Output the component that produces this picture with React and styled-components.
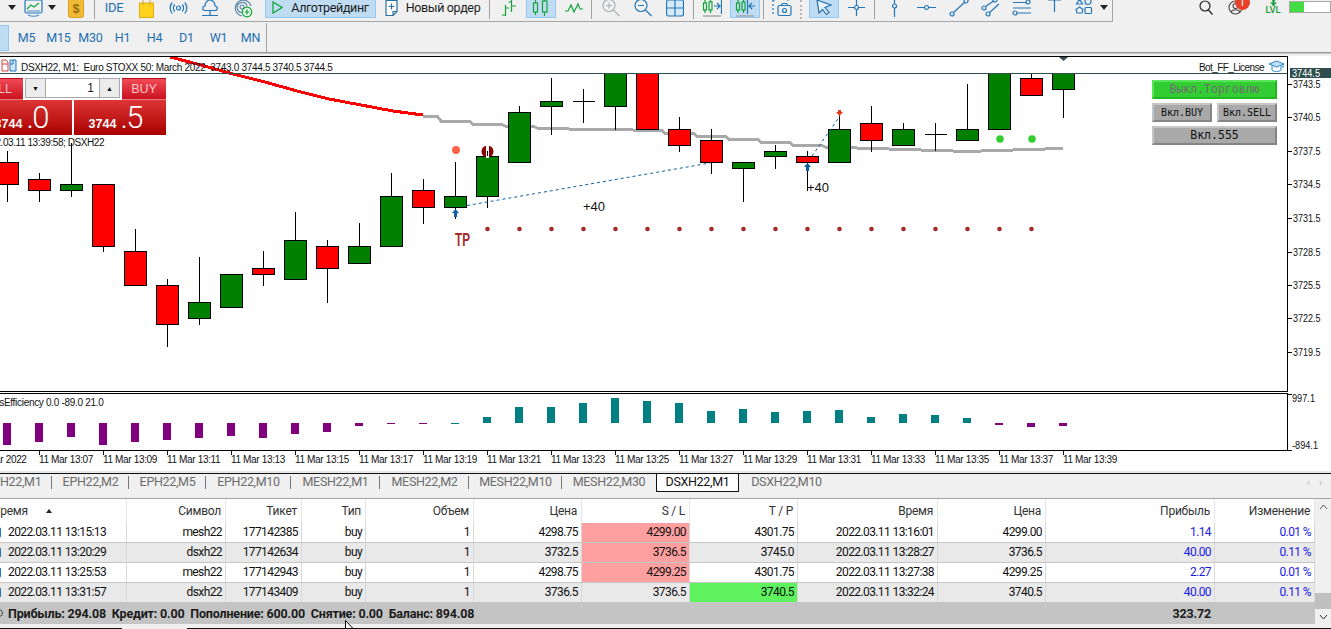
import React from 'react';
import styled, { createGlobalStyle } from 'styled-components';

const BLUE = '#2277b8';
const GREEN = '#12a33a';
const UI_FONT = 'Roboto, "Liberation Sans", sans-serif';
const CHART_FONT = '"Liberation Sans", Arial, sans-serif';

const GlobalStyle = createGlobalStyle`
  html, body { margin: 0; padding: 0; background: #f0f0f0; overflow: hidden; }
  #root { width: 1331px; height: 629px; overflow: hidden; }
`;

const Page = styled.div`
  position: relative;
  width: 1331px;
  height: 629px;
  overflow: hidden;
  background: #f0f0f0;
  font-family: ${UI_FONT};
  display: flex;
  flex-direction: column;
`;

/* ---------- toolbars ---------- */
const TopBar = styled.div`
  height: 22px;
  flex: none;
  display: flex;
  justify-content: space-between;
`;
const ToolGroup = styled.div`
  width: 1113px;
  height: 22px;
  box-sizing: border-box;
  display: flex;
  border-bottom: 1px solid #a6a6a6;
  border-right: 1px solid #a6a6a6;
  padding-left: 4px;
`;
const Slot = styled.div`
  flex: none;
  width: ${(p) => p.$w}px;
  height: 21px;
  margin-top: -3px;
  display: flex;
  align-items: center;
  justify-content: center;
  gap: ${(p) => p.$gap || 0}px;
  box-sizing: border-box;
  font-size: 12.5px;
  color: #1c1c1c;
  letter-spacing: -0.35px;
  ${(p) => p.$ml && `margin-left: ${p.$ml}px;`}
  ${(p) => p.$on && 'background: #c0dcf3; border: 1px solid #90c8f6;'}
`;
const IdeLabel = styled.span`
  color: #1f6fb0;
  font-size: 13px;
  letter-spacing: -0.4px;
`;
const Sep = styled.div`
  flex: none;
  width: 1px;
  height: 19px;
  background: #a0a0a0;
`;
const Grip = styled.div`
  flex: none;
  width: 9px;
  height: 19px;
  box-sizing: border-box;
  border-left: 2px dotted #b5b5b5;
`;
const StatusGroup = styled.div`
  display: flex;
  align-items: flex-start;
  height: 22px;
`;
const StatusSlot = styled.div`
  position: relative;
  flex: none;
  width: ${(p) => p.$w}px;
  margin-right: ${(p) => p.$mr || 0}px;
  height: 16px;
  margin-top: -1px;
  display: flex;
  justify-content: center;
  align-items: ${(p) => (p.$top ? 'flex-start' : 'center')};
`;
const Badge = styled.span`
  position: absolute;
  left: 16px;
  top: -4px;
  width: 15px;
  height: 15px;
  border-radius: 50%;
  background: #e8402a;
  color: #fff;
  font-size: 11px;
  line-height: 15px;
  text-align: center;
`;
const LvlText = styled.span`
  position: absolute;
  top: 6px;
  left: -2px;
  right: -2px;
  text-align: center;
  color: #1a9a3a;
  font-size: 9.5px;
  line-height: 10px;
  font-weight: 500;
  letter-spacing: -0.2px;
`;
const LevelBar = styled.div`
  flex: none;
  width: 42px;
  height: 12px;
  margin-top: 1px;
  margin-left: 8px;
  box-sizing: border-box;
  border: 1px solid #a8a8a8;
  background: #fff;
`;
const LevelFill = styled.div`
  height: 100%;
  background: #42dd42;
`;

const TfBar = styled.div`
  height: 30px;
  flex: none;
  display: flex;
`;
const TfGroup = styled.div`
  width: 267px;
  box-sizing: border-box;
  border-right: 1px solid #a6a6a6;
  display: flex;
  align-items: center;
  margin-top: 1px;
  height: 29px;
`;
const TfActive = styled.div`
  flex: none;
  width: 9px;
  height: 26px;
  margin-right: 1.5px;
  background: #c0dcf3;
  border-right: 1px solid #90c8f6;
  border-top: 1px solid #90c8f6;
  border-bottom: 1px solid #90c8f6;
  box-sizing: border-box;
  overflow: hidden;
  display: flex;
  justify-content: flex-end;
  align-items: center;
  padding-right: 6px;
  color: #1f6fb0;
  font-size: 12.5px;
`;
const TfItem = styled.div`
  flex: none;
  width: 32px;
  text-align: center;
  color: #1f6fb0;
  font-size: 12.5px;
  letter-spacing: -0.2px;
`;
const BarShade = styled.div`
  height: 4px;
  flex: none;
  box-sizing: border-box;
  border-top: 1px solid #9a9a9a;
  box-shadow: inset 0 1px 0 #c4c4c4;
`;

/* ---------- chart ---------- */
const ChartArea = styled.div`
  flex: none;
  background: #fff;
  display: flex;
  flex-direction: column;
`;
const MainPane = styled.div`
  position: relative;
  height: 336px;
  flex: none;
  overflow: hidden;
  font-family: ${CHART_FONT};
  svg { display: block; }
`;
const PaneTitle = styled.div`
  position: absolute;
  left: 21px;
  top: 6px;
  font-size: 10px;
  line-height: 11px;
  letter-spacing: -0.32px;
  color: #111;
  white-space: pre;
`;
const BotName = styled.div`
  position: absolute;
  right: 67px;
  top: 6px;
  font-size: 10px;
  line-height: 11px;
  letter-spacing: -0.55px;
  color: #111;
`;
const SideIcon = styled.div`
  position: absolute;
  top: ${(p) => p.$top}px;
  ${(p) => (p.$right ? `right: ${p.$right}px;` : `left: ${p.$left}px;`)}
  line-height: 0;
`;
const TradePanel = styled.div`
  position: absolute;
  left: 0;
  top: 22px;
  width: 166px;
  display: flex;
  flex-direction: column;
`;
const TradeTop = styled.div`
  display: flex;
  height: 22px;
`;
const TradeTab = styled.div`
  flex: none;
  width: ${(p) => p.$w}px;
  height: 22px;
  box-sizing: border-box;
  background: linear-gradient(#f14a56, #c9121f);
  border-top: 1px solid #b01018;
  border-bottom: 1px solid #ee7a80;
  color: #ffc4c4;
  font-size: 12.5px;
  display: flex;
  align-items: center;
  justify-content: ${(p) => (p.$left ? 'flex-end' : 'center')};
  padding-right: ${(p) => (p.$left ? 11 : 0)}px;
  overflow: hidden;
`;
const Spin = styled.div`
  flex: none;
  width: 95px;
  height: 20px;
  margin: 0 2px;
  box-sizing: border-box;
  border: 1px solid #a8a8a8;
  background: #fff;
  display: flex;
  align-items: stretch;
  font-size: 12px;
  color: #222;
`;
const SpinBtn = styled.div`
  flex: none;
  width: 19px;
  background: #ececec;
  ${(p) => (p.$end ? 'border-left: 1px solid #a8a8a8;' : 'border-right: 1px solid #a8a8a8;')}
  color: #111;
  display: flex;
  align-items: center;
  justify-content: center;
  font-size: 7px;
`;
const SpinVal = styled.div`
  flex: 1;
  text-align: right;
  padding-right: 5px;
  line-height: 18px;
`;
const TradeBottom = styled.div`
  display: flex;
  gap: 2px;
  height: 35px;
`;
const PriceBox = styled.div`
  flex: none;
  width: ${(p) => p.$w}px;
  height: 35px;
  box-sizing: border-box;
  background: linear-gradient(#dd3535, #a90000);
  color: #fff;
  display: flex;
  align-items: baseline;
  justify-content: flex-end;
  padding-right: ${(p) => p.$pr}px;
  line-height: 36px;
  overflow: hidden;
`;
const PriceSmall = styled.span`
  font-family: ${CHART_FONT};
  font-size: 12.5px;
  font-weight: 700;
  margin-right: 4px;
`;
const PriceBig = styled.span`
  font-family: Roboto, sans-serif;
  font-size: 31px;
  font-weight: 300;
  letter-spacing: -1.5px;
`;
const TimeNote = styled.div`
  position: absolute;
  left: -20px;
  top: 81px;
  font-size: 10px;
  line-height: 11px;
  letter-spacing: -0.42px;
  color: #111;
  white-space: pre;
`;
const BotButtons = styled.div`
  position: absolute;
  left: 1152px;
  top: 24px;
  width: 125px;
  display: flex;
  flex-wrap: wrap;
  gap: 4px 5px;
`;
const BotButton = styled.div`
  flex: none;
  width: ${(p) => p.$w}px;
  height: 19px;
  box-sizing: border-box;
  background: ${(p) => (p.$active ? '#32cd32' : '#a9a9a9')};
  border: 2px solid;
  border-color: ${(p) => (p.$active ? '#58e458 #1fb81f #1fb81f #58e458' : '#c6c6c6 #858585 #858585 #c6c6c6')};
  color: ${(p) => (p.$active ? '#6f6f6f' : '#111')};
  font-family: "DejaVu Sans Mono", "Liberation Mono", monospace;
  font-size: ${(p) => p.$size || 10}px;
  line-height: 15px;
  text-align: center;
  white-space: nowrap;
`;
const IndicatorPane = styled.div`
  position: relative;
  height: 58px;
  margin-top: 1px;
  flex: none;
  font-family: ${CHART_FONT};
  overflow: hidden;
  svg { display: block; }
`;
const IndicatorTitle = styled.div`
  position: absolute;
  left: -25px;
  top: 4px;
  font-size: 10px;
  line-height: 11px;
  letter-spacing: -0.3px;
  color: #111;
`;
const TimeAxis = styled.div`
  height: 20px;
  flex: none;
  display: flex;
  margin-left: -25px;
  width: 1356px;
  font-family: ${CHART_FONT};
`;
const TimeTick = styled.div`
  flex: none;
  width: 64px;
  height: 20px;
  box-sizing: border-box;
  font-size: 10px;
  letter-spacing: -0.35px;
  color: #111;
  white-space: nowrap;
  line-height: 18px;
  background: linear-gradient(#111, #111) 0 0 / 1px 4px no-repeat;
`;

/* ---------- tabs ---------- */
const TabStrip = styled.div`
  height: 25px;
  flex: none;
  box-sizing: border-box;
  border-top: 1px solid #111;
  background: #f0f0f0;
  margin-top: 2px;
  position: relative;
  box-shadow: 0 -2px 0 #e8e8e8;
`;
const TabRow = styled.div`
  display: flex;
  height: 18px;
  align-items: stretch;
`;
const Tab = styled.div`
  flex: none;
  width: ${(p) => p.$w}px;
  height: 18px;
  box-sizing: border-box;
  text-align: center;
  color: ${(p) => (p.$active ? '#111' : '#6c6c6c')};
  font-size: 12.5px;
  letter-spacing: -0.32px;
  line-height: 16px;
  background: ${(p) => (p.$active ? '#fff' : 'transparent')};
  ${(p) => (p.$active ? 'border: 1px solid #111; border-top: 0;' : '')}
  ${(p) => p.$sep && 'background-image: linear-gradient(#777, #777); background-size: 1px 13px; background-position: right 2px; background-repeat: no-repeat;'}
`;
const TabPager = styled.div`
  position: absolute;
  right: 9px;
  top: 4px;
  display: flex;
  gap: 9px;
  color: #b4b4b4;
  font-size: 10px;
  line-height: 10px;
`;

/* ---------- table ---------- */
const TableWrap = styled.div`
  flex: none;
  display: flex;
  height: 125px;
  border-top: 1px solid #a4a4a4;
`;
const Table = styled.div`
  flex: none;
  width: 1315px;
  display: flex;
  flex-direction: column;
`;
const COLS = '127px 99px 76px 64px 108px 108px 108px 108px 140px 108px 169px 100px';
const HeadRow = styled.div`
  display: grid;
  grid-template-columns: ${COLS};
  height: 23.5px;
  background: #fff;
`;
const HeadCell = styled.div`
  display: flex;
  justify-content: ${(p) => (p.$first ? 'flex-start' : 'flex-end')};
  align-items: center;
  padding-right: ${(p) => (p.$first ? 0 : 4)}px;
  margin-left: ${(p) => (p.$first ? -7 : 0)}px;
  border-right: 1px solid #e4e4e4;
  font-size: 12px;
  letter-spacing: -0.25px;
  color: #333;
  white-space: nowrap;
`;
const SortArrow = styled.span`
  width: 0;
  height: 0;
  margin-left: 18px;
  border-left: 3.5px solid transparent;
  border-right: 3.5px solid transparent;
  border-bottom: 4px solid #222;
`;
const DataRow = styled.div`
  display: grid;
  grid-template-columns: ${COLS};
  height: 20px;
  box-sizing: border-box;
  border-bottom: 1px solid #c6c6c6;
  background: ${(p) => (p.$alt ? '#e9e9e9' : '#fff')};
`;
const DataCell = styled.div`
  display: flex;
  justify-content: ${(p) => (p.$first ? 'flex-start' : 'flex-end')};
  align-items: center;
  padding-right: ${(p) => (p.$first ? 0 : 3)}px;
  border-right: 1px solid #d8d8d8;
  font-size: 12px;
  letter-spacing: -0.6px;
  color: ${(p) => (p.$profit ? '#1a1ae6' : '#111')};
  background: ${(p) => (p.$hl === 'sl' ? '#ff9f9f' : p.$hl === 'tp' ? '#5ff25f' : 'transparent')};
  white-space: nowrap;
`;
const RowMark = styled.span`
  flex: none;
  width: 10px;
  height: 11px;
  margin: 0 7px 0 -9px;
  border: 1px solid #2277b8;
  border-radius: 2px;
  box-sizing: border-box;
`;
const TotalRow = styled.div`
  flex: none;
  height: 21px;
  display: flex;
  justify-content: space-between;
  align-items: center;
  padding-right: 104px;
  background: #c4c4c4;
  font-size: 12.5px;
  font-weight: 700;
  color: #1b1b1b;
  letter-spacing: -0.18px;
  white-space: pre;
`;
const TotalLeft = styled.div`
  display: flex;
  align-items: center;
`;
const TotalMark = styled.span`
  width: 8px;
  height: 8px;
  margin: 0 5px 0 -5px;
  border-radius: 50%;
  border: 1px solid #444;
  box-sizing: border-box;
`;
const Scroll = styled.div`
  flex: none;
  width: 16px;
  display: flex;
  flex-direction: column;
  align-items: stretch;
  background: #f0f0f0;
`;
const ScrollBtn = styled.div`
  height: ${(p) => p.$h}px;
  ${(p) => p.$end && 'margin-top: auto;'}
  display: flex;
  justify-content: center;
  align-items: center;
  line-height: 0;
`;
const ScrollThumb = styled.div`
  height: 16px;
  margin-top: 78px;
  background: #c0c0c0;
`;
const BottomEdge = styled.div`
  flex: none;
  margin-top: 4px;
  height: 1px;
  display: flex;
`;
const EdgeLine = styled.div`
  height: 1px;
  background: ${(p) => (p.$gap ? 'transparent' : '#111')};
  ${(p) => (p.$w ? `width: ${p.$w}px; flex: none;` : 'flex: 1;')}
`;
const Pointer = styled.div`
  position: absolute;
  left: 345px;
  top: 620px;
  line-height: 0;
`;

/* ---------- icons ---------- */
const Ico = ({ w = 20, h = 20, children }) => (
  <svg width={w} height={h} viewBox={`0 0 ${w} ${h}`} fill="none" strokeWidth="1.2" stroke={BLUE}>
    {children}
  </svg>
);
const Caret = () => (
  <svg width="8" height="5" viewBox="0 0 8 5"><path d="M0 0h8L4 5z" fill="#222" /></svg>
);
const MonitorIcon = () => (
  <Ico w={19} h={20}>
    <rect x="1" y="2" width="17" height="13" rx="1.5" />
    <path d="M3 11l4-4 3 2 5-4" stroke={GREEN} />
    <path d="M3 13h13M4 17c3 1.5 8 1.5 11 0" stroke="#4a90c8" />
  </Ico>
);
const DollarIcon = () => (
  <svg width="16" height="20" viewBox="0 0 16 20">
    <rect x=".5" y=".5" width="15" height="19" rx="2" fill="#f0bb35" stroke="#d99e1c" />
    <text x="8" y="14.5" fontSize="12" fontWeight="700" textAnchor="middle" fill="#9a6a10" fontFamily="Liberation Sans">$</text>
  </svg>
);
const BagIcon = () => (
  <svg width="15" height="20" viewBox="0 0 15 20">
    <rect x=".5" y="5" width="14" height="14.5" fill="#ffd21e" stroke="#e2ae10" />
    <path d="M4 7V3c0-3 7-3 7 0v4" fill="none" stroke="#caa44a" />
  </svg>
);
const SignalIcon = () => (
  <Ico w={19} h={16}>
    <circle cx="9.5" cy="8" r="2" />
    <path d="M5.8 4.5a5 5 0 000 7M13.2 4.5a5 5 0 010 7M3.2 2.5a8.5 8.5 0 000 11M15.8 2.5a8.5 8.5 0 010 11" />
  </Ico>
);
const CloudIcon = () => (
  <Ico w={18} h={20}>
    <path d="M4 12.5C1 12.5 1 8 4 8c0-3 2-6 5-6s5 3 5 6c3 0 3 4.500 0 4.500z" />
    <path d="M9 13v4M1 17.500h16" />
  </Ico>
);
const RingsIcon = () => (
  <Ico w={20} h={20}>
    <path d="M9 18A8 8 0 1118 8M9 14.500A5 5 0 1114 8" stroke="#5a88a8" />
    <circle cx="9" cy="9" r="2" stroke="#5a88a8" />
    <circle cx="14" cy="14" r="4.800" fill="#e8f5e8" stroke={GREEN} />
    <path d="M14 11.500v5M11.500 14h5" stroke={GREEN} />
  </Ico>
);
const PlayIcon = () => (
  <svg width="11" height="13" viewBox="0 0 11 13" fill="none"><path d="M1 1l9 5.500-9 5.500z" stroke={GREEN} strokeWidth="1.3" /></svg>
);
const OrderIcon = () => (
  <Ico w={13} h={18}>
    <path d="M1 1.500h11v11l-4 4H1z" fill="#fff" stroke="#2a6f9f" />
    <path d="M8 16.500v-4h4M6.500 4.500v6M3.500 7.500h6" stroke="#2a6f9f" />
  </Ico>
);
const BarsIcon = () => (
  <Ico w={17} h={18}>
    <g stroke={GREEN}>
      <path d="M5.500 6v11M2 16h3.500M5.500 9H9" />
      <path d="M11.500 1v12M8.500 3h3M11.500 7H16" />
    </g>
  </Ico>
);
const CandlesIcon = () => (
  <Ico w={18} h={18}>
    <g stroke={GREEN}>
      <rect x="1.500" y="4" width="4" height="9" />
      <path d="M3.500 1v3M3.500 13v3" />
      <rect x="10.500" y="2" width="4.500" height="11" />
      <path d="M12.500 0v2M12.500 13v4" />
    </g>
  </Ico>
);
const LineIcon = () => (
  <Ico w={18} h={14}>
    <path d="M0 10h3l3-6 3 7 4-8 2 5h3" stroke={GREEN} />
  </Ico>
);
const LensIcon = ({ color, plus }) => (
  <Ico w={18} h={18}>
    <circle cx="7" cy="6.500" r="6" stroke={color} />
    <path d="M11.500 11l6 6M4 6.500h6" stroke={color} />
    {plus && <path d="M7 3.500v6" stroke={color} />}
  </Ico>
);
const GridIcon = () => (
  <Ico w={18} h={18}>
    <rect x=".5" y="1" width="17" height="16" rx="2" fill="#d6eafa" />
    <path d="M9 1v16M.5 9h17" />
  </Ico>
);
const ShiftIcon = ({ back }) => (
  <Ico w={20} h={18}>
    <g stroke={GREEN}>
      <rect x="1.500" y="4" width="3" height="7" />
      <path d="M3 1v3M3 11v3" />
      <rect x="7" y="3" width="3" height="8" />
      <path d="M8.500 1v2M8.500 11v3" />
    </g>
    {back ? <path d="M12.500 1v14M20 7h-6l3-3M14 7l3 3" /> : <path d="M12 7h6l-3-3M18 7l-3 3M19.500 1v14" />}
    <path d="M1 17h18" stroke="#9a9a9a" />
  </Ico>
);
const CameraIcon = () => (
  <Ico w={20} h={18}>
    <path d="M1 1v16M1 1h3M15 1h3" strokeDasharray="2 2" />
    <rect x="6" y="6.500" width="13" height="10" rx="1.500" />
    <path d="M9 6.500l1.500-2h4l1.500 2" />
    <circle cx="12.500" cy="11.500" r="2" />
  </Ico>
);
const CursorIcon = () => (
  <Ico w={16} h={17}>
    <path d="M1 1l14 5-6 2.500 4 5-2.500 2-4-5L3 14z" stroke="#276ea8" fill="#e4f0fa" />
  </Ico>
);
const CrossIcon = () => (
  <Ico w={17} h={17}>
    <circle cx="8.500" cy="8.500" r="2" />
    <path d="M8.500 0v6.500M8.500 10.500V17M0 8.500h6.500M10.500 8.500H17" />
  </Ico>
);
const VLineIcon = () => (
  <Ico w={9} h={18}>
    <circle cx="4.500" cy="7" r="2" />
    <path d="M4.500 0v5M4.500 9v9" />
  </Ico>
);
const HLineIcon = () => (
  <Ico w={19} h={9}>
    <circle cx="9.500" cy="4.500" r="2" />
    <path d="M0 4.500h7.500M11.500 4.500H19" />
  </Ico>
);
const TrendIcon = () => (
  <Ico w={20} h={18}>
    <circle cx="3" cy="15" r="2" />
    <circle cx="17" cy="2" r="2" />
    <path d="M4.500 13.500l11-10" />
  </Ico>
);
const ChannelIcon = () => (
  <Ico w={20} h={18}>
    <circle cx="3" cy="9" r="2" />
    <circle cx="14" cy="1" r="2" />
    <circle cx="7" cy="15" r="2" />
    <path d="M4.500 7.500L12.500 2M8.500 13.500L18 5" />
  </Ico>
);
const LevelsIcon = () => (
  <Ico w={20} h={18}>
    <circle cx="16" cy="3" r="2" />
    <circle cx="3" cy="14" r="2" />
    <path d="M1 3.500h13M1 9h18M5 14h14" />
  </Ico>
);
const TeeIcon = () => (
  <Ico w={13} h={18}>
    <path d="M0 1h13M6.500 1v12" />
  </Ico>
);
const ShapesIcon = () => (
  <Ico w={18} h={18}>
    <path d="M4.500 0l3 5h-6z" />
    <circle cx="13" cy="2.500" r="3" />
    <path d="M4.500 8l3.500 2.500-1 3.500h-5l-1-3.500z" />
    <rect x="10" y="8.500" width="6.500" height="6" rx="1" />
  </Ico>
);
const SearchIcon = () => (
  <svg width="14" height="15" viewBox="0 0 14 15" fill="none" stroke="#222" strokeWidth="1.200">
    <circle cx="6" cy="6" r="5" />
    <path d="M9.500 10l4 4.500" />
  </svg>
);
const UserIcon = () => (
  <svg width="15" height="15" viewBox="0 0 15 15" fill="none" stroke="#444" strokeWidth="1.100">
    <circle cx="7.500" cy="7.500" r="6.500" />
    <circle cx="7.500" cy="6" r="2.500" />
    <path d="M3 12c1-3 8-3 9 0" />
  </svg>
);
const SproutIcon = () => (
  <svg width="11" height="7" viewBox="0 0 11 7" fill="#1a9a3a"><path d="M5.500 0l2 2H6.500v1.500H9l-2 2H6.500V7h-2V5.500H4l-2-2h2.500V2h-1z" /></svg>
);
const HatIcon = () => (
  <svg width="15" height="14" viewBox="0 0 15 14" fill="none" stroke="#2a88c8" strokeWidth="1">
    <path d="M0 5l7.500-3L15 5l-7.500 3z" fill="#bfe0f5" />
    <path d="M3 7v4c2 2 7 2 9 0V7M14 5v4" />
  </svg>
);
const BookIcon = () => (
  <svg width="16" height="13" viewBox="0 0 16 13" fill="none">
    <path d="M1 1h4l2 2v9H1z" fill="#fff" stroke="#d84040" />
    <path d="M1 5h6" stroke="#d84040" />
    <path d="M9 1h6v11H9z" fill="#cfe6f8" stroke={BLUE} />
    <path d="M9 5h3V1" stroke={BLUE} />
  </svg>
);

/* ---------- chart data, page coordinates ---------- */
// kind, wick top, body top, body bottom, wick bottom
const CANDLES = [
  ['r', 151, 162, 184, 201], ['r', 173, 179, 190, 201], ['g', 143, 184, 190, 196], ['r', 184, 184, 246, 251],
  ['r', 229, 251, 285, 285], ['r', 279, 285, 324, 346], ['g', 257, 302, 318, 324], ['g', 274, 274, 307, 307],
  ['r', 251, 268, 274, 285], ['g', 212, 240, 279, 279], ['r', 240, 246, 268, 302], ['g', 223, 246, 263, 263],
  ['g', 173, 196, 246, 246], ['r', 179, 190, 207, 223], ['g', 162, 196, 207, 218], ['g', 151, 156, 196, 207],
  ['g', 106, 112, 162, 162], ['g', 78, 101, 106, 134], ['d', 89, 101, 101, 123], ['g', 73, 73, 106, 129],
  ['r', 73, 73, 129, 129], ['r', 117, 129, 145, 151], ['r', 129, 140, 162, 173], ['g', 162, 162, 168, 201],
  ['g', 145, 151, 156, 168], ['r', 151, 156, 162, 190], ['g', 112, 129, 162, 162], ['r', 106, 123, 140, 151],
  ['g', 123, 129, 145, 145], ['d', 123, 134, 134, 151], ['g', 84, 129, 140, 140], ['g', 73, 73, 129, 129],
  ['r', 73, 78, 95, 95], ['g', 73, 73, 89, 117],
];
const MA_RED = [[170, 57], [201, 65], [233, 74], [265, 82], [297, 91], [329, 99], [361, 105], [393, 111], [423, 115]];
const MA_GRAY = [116, 121, 124, 126, 128, 129, 129, 130, 133, 136, 139, 142, 145, 147, 148, 149, 150, 151, 150, 149, 148];
const PRICES = [[84, '3743.5'], [117, '3740.5'], [151, '3737.5'], [184, '3734.5'], [218, '3731.5'], [252, '3728.5'], [285, '3725.5'], [318, '3722.5'], [352, '3719.5']];
const BARS = [445, 442, 437, 445, 442, 440, 438, 436, 438, 434, 432, 426, 424, 424, 424, 417, 407, 407, 403, 398, 401, 403, 411, 409, 412, 411, 410, 417, 414, 415, 418, 425, 427, 426];
const TIMES = ['11 Mar 2022', '11 Mar 13:07', '11 Mar 13:09', '11 Mar 13:11', '11 Mar 13:13', '11 Mar 13:15', '11 Mar 13:17', '11 Mar 13:19', '11 Mar 13:21', '11 Mar 13:23', '11 Mar 13:25', '11 Mar 13:27', '11 Mar 13:29', '11 Mar 13:31', '11 Mar 13:33', '11 Mar 13:35', '11 Mar 13:37', '11 Mar 13:39'];
const TABS = [
  ['EPH22,M1', 77, -25], ['EPH22,M2', 77], ['EPH22,M5', 77], ['EPH22,M10', 85], ['MESH22,M1', 89], ['MESH22,M2', 89],
  ['MESH22,M10', 93], ['MESH22,M30', 94], ['DSXH22,M1', 83], ['DSXH22,M10', 95],
];
const HEADS = ['Время', 'Символ', 'Тикет', 'Тип', 'Объем', 'Цена', 'S / L', 'T / P', 'Время', 'Цена', 'Прибыль', 'Изменение'];
const ROWS = [
  ['2022.03.11 13:15:13', 'mesh22', '177142385', 'buy', '1', '4298.75', '4299.00', '4301.75', '2022.03.11 13:16:01', '4299.00', '1.14', '0.01 %'],
  ['2022.03.11 13:20:29', 'dsxh22', '177142634', 'buy', '1', '3732.5', '3736.5', '3745.0', '2022.03.11 13:28:27', '3736.5', '40.00', '0.11 %'],
  ['2022.03.11 13:25:53', 'mesh22', '177142943', 'buy', '1', '4298.75', '4299.25', '4301.75', '2022.03.11 13:27:38', '4299.25', '2.27', '0.01 %'],
  ['2022.03.11 13:31:57', 'dsxh22', '177143409', 'buy', '1', '3736.5', '3736.5', '3740.5', '2022.03.11 13:32:24', '3740.5', '40.00', '0.11 %'],
];
const cx = (i) => 7.5 + 32 * i;

const Candle = ({ d, i }) => {
  const [k, wt, bt, bb, wb] = d;
  const x = cx(i);
  if (k === 'd') {
    return <path d={`M${x} ${wt}V${wb}M${x - 11} ${bt + 0.5}H${x + 11}`} stroke="#000" fill="none" />;
  }
  return (
    <g>
      <path d={`M${x} ${wt}V${wb + 1}`} stroke="#000" />
      <rect x={x - 11} y={bt + 0.5} width="22" height={bb - bt} fill={k === 'r' ? '#ff0000' : '#008000'} stroke="#000" />
    </g>
  );
};

const MainChart = () => {
  const dots = [];
  for (let x = 487.5; x <= 1032; x += 32) dots.push(x);
  const gray = MA_GRAY.map((y, i) => {
    const x = 423 + 32 * i;
    const from = i ? x - 14 : x;
    const to = i === MA_GRAY.length - 1 ? x : x + 14;
    return `${i ? 'L' : 'M'}${from} ${y}H${to}`;
  }).join('');
  const red = MA_RED.map(([x, y], i) => `${i ? 'L' : 'M'}${x} ${y}`).join('');
  return (
    <svg width="1331" height="336" viewBox="0 56 1331 336">
      <path d={gray} stroke="#a9a9a9" strokeWidth="3" fill="none" shapeRendering="crispEdges" />
      <path d={red} stroke="#ff0000" strokeWidth="3" fill="none" shapeRendering="crispEdges" />
      <g shapeRendering="crispEdges">
        {CANDLES.map((d, i) => <Candle key={i} d={d} i={i} />)}
      </g>
      <path d="M467 205.500L710 163M812 156l28-40" stroke="#0a5fa8" strokeDasharray="3 3" fill="none" />
      <path d="M455.500 209l3.500 4h-2v4h-3v-4h-2zM807.500 163l3.500 4h-2v4h-3v-4h-2z" fill="#0a5fa8" />
      <path d="M839.500 116l-3.500-4h2v-2h3v2h2z" fill="#e8391a" />
      <circle cx="456" cy="150" r="4" fill="#ff6347" />
      <circle cx="487.500" cy="151.500" r="6" fill="#8b0000" />
      <rect x="486" y="145" width="3" height="13" fill="#fff" />
      <path d="M487.500 151v5" stroke="#000" shapeRendering="crispEdges" />
      {dots.map((x) => <circle key={x} cx={x} cy="229" r="2.300" fill="#a52a2a" />)}
      <circle cx="1000" cy="139" r="3.800" fill="#32cd32" />
      <circle cx="1032" cy="139" r="3.800" fill="#32cd32" />
      <text x="583" y="211" fontSize="13" fill="#111" fontFamily={CHART_FONT}>+40</text>
      <text x="807" y="192" fontSize="13" fill="#111" fontFamily={CHART_FONT}>+40</text>
      <text x="455" y="246" fontSize="18" fontWeight="700" fill="#a52a2a" fontFamily={CHART_FONT} textLength="15" lengthAdjust="spacingAndGlyphs">TP</text>
      <path d="M1059 57h9l-4.500 4z" fill="#2f4f4f" />
      <g shapeRendering="crispEdges">
        <path d="M0 56.500H1288" stroke="#000" />
        <path d="M0 73.500H1288" stroke="#2f4f4f" />
        <path d="M0 391.500H1288M1287.500 56V392" stroke="#000" />
        {PRICES.map(([y]) => <path key={y} d={`M1288 ${y + 0.5}h4`} stroke="#000" />)}
        <rect x="1290" y="68" width="41" height="10" fill="#2f4f4f" />
      </g>
      {PRICES.map(([y, t]) => <text key={t} x="1293" y={y + 4} fontSize="10.500" fill="#111" fontFamily={CHART_FONT} textLength="27.500" lengthAdjust="spacingAndGlyphs">{t}</text>)}
      <text x="1292" y="77" fontSize="10.500" fill="#fff" fontFamily={CHART_FONT} textLength="28" lengthAdjust="spacingAndGlyphs">3744.5</text>
    </svg>
  );
};

const IndicatorChart = () => (
  <svg width="1331" height="58" viewBox="0 393 1331 58">
    <g shapeRendering="crispEdges">
      {BARS.map((y, i) => {
        const top = Math.min(y, 423);
        const h = Math.max(Math.abs(y - 423), 1);
        const teal = i >= 14 && i <= 30;
        return <rect key={i} x={cx(i) - 4.500} y={top} width="8" height={h} fill={teal ? '#008080' : '#800080'} />;
      })}
      <path d="M0 393.500H1288M0 450.500H1288M1287.500 393V451M1288 394.500h4M1288 450.500h4" stroke="#000" />
    </g>
    <text x="1292" y="402" fontSize="10.500" fill="#111" fontFamily={CHART_FONT} textLength="23" lengthAdjust="spacingAndGlyphs">997.1</text>
    <text x="1292" y="449" fontSize="10.500" fill="#111" fontFamily={CHART_FONT} textLength="26" lengthAdjust="spacingAndGlyphs">-894.1</text>
  </svg>
);

export default function App() {
  return (
    <Page>
      <GlobalStyle />
      <TopBar>
        <ToolGroup>
          <Slot $w={15}><Caret /></Slot>
          <Slot $w={28}><MonitorIcon /></Slot>
          <Slot $w={10}><Caret /></Slot>
          <Slot $w={37}><DollarIcon /></Slot>
          <Sep />
          <Slot $w={38}><IdeLabel>IDE</IdeLabel></Slot>
          <Slot $w={26}><BagIcon /></Slot>
          <Slot $w={38}><SignalIcon /></Slot>
          <Slot $w={26}><CloudIcon /></Slot>
          <Slot $w={40}><RingsIcon /></Slot>
          <Slot $w={111} $ml={2} $on $gap={8}><PlayIcon />Алготрейдинг</Slot>
          <Slot $w={113} $gap={8}><OrderIcon />Новый ордер</Slot>
          <Sep />
          <Slot $w={36}><BarsIcon /></Slot>
          <Slot $w={30} $on><CandlesIcon /></Slot>
          <Slot $w={35}><LineIcon /></Slot>
          <Sep />
          <Slot $w={38}><LensIcon color="#a8b4bc" plus /></Slot>
          <Slot $w={26}><LensIcon color={BLUE} /></Slot>
          <Slot $w={37}><GridIcon /></Slot>
          <Sep />
          <Slot $w={36}><ShiftIcon /></Slot>
          <Slot $w={30} $on><ShiftIcon back /></Slot>
          <Slot $w={3} />
          <Sep />
          <Slot $w={36}><CameraIcon /></Slot>
          <Grip />
          <Slot $w={30} $on><CursorIcon /></Slot>
          <Slot $w={35}><CrossIcon /></Slot>
          <Sep />
          <Slot $w={38}><VLineIcon /></Slot>
          <Slot $w={27}><HLineIcon /></Slot>
          <Slot $w={38}><TrendIcon /></Slot>
          <Slot $w={26}><ChannelIcon /></Slot>
          <Slot $w={36}><LevelsIcon /></Slot>
          <Slot $w={29}><TeeIcon /></Slot>
          <Slot $w={30}><ShapesIcon /></Slot>
          <Slot $w={9}><Caret /></Slot>
        </ToolGroup>
        <StatusGroup>
          <StatusSlot $w={26}><SearchIcon /></StatusSlot>
          <StatusSlot $w={34} $mr={12.5}><UserIcon /><Badge>1</Badge></StatusSlot>
          <StatusSlot $w={16} $top><SproutIcon /><LvlText>LVL</LvlText></StatusSlot>
          <LevelBar><LevelFill style={{ width: '36%' }} /></LevelBar>
        </StatusGroup>
      </TopBar>
      <TfBar>
        <TfGroup>
          <TfActive>M1</TfActive>
          {['M5', 'M15', 'M30', 'H1', 'H4', 'D1', 'W1', 'MN'].map((t) => <TfItem key={t}>{t}</TfItem>)}
        </TfGroup>
      </TfBar>
      <BarShade />
      <ChartArea>
        <MainPane>
          <MainChart />
          <SideIcon $left={1} $top={3}><BookIcon /></SideIcon>
          <PaneTitle>{'DSXH22, M1:  Euro STOXX 50: March 2022  3743.0 3744.5 3740.5 3744.5'}</PaneTitle>
          <BotName>Bot_FF_License</BotName>
          <SideIcon $right={47} $top={3}><HatIcon /></SideIcon>
          <TradePanel>
            <TradeTop>
              <TradeTab $w={23} $left>SELL</TradeTab>
              <Spin>
                <SpinBtn>▼</SpinBtn>
                <SpinVal>1</SpinVal>
                <SpinBtn $end>▲</SpinBtn>
              </Spin>
              <TradeTab $w={44}>BUY</TradeTab>
            </TradeTop>
            <TradeBottom>
              <PriceBox $w={72} $pr={24}><PriceSmall>3744</PriceSmall><PriceBig>.0</PriceBig></PriceBox>
              <PriceBox $w={92} $pr={24}><PriceSmall>3744</PriceSmall><PriceBig>.5</PriceBig></PriceBox>
            </TradeBottom>
          </TradePanel>
          <TimeNote>2022.03.11 13:39:58; DSXH22</TimeNote>
          <BotButtons>
            <BotButton $w={125} $active $size={11.5}>Выкл.Торговлю</BotButton>
            <BotButton $w={60}>Вкл.BUY</BotButton>
            <BotButton $w={60}>Вкл.SELL</BotButton>
            <BotButton $w={125} $size={11.5}>Вкл.555</BotButton>
          </BotButtons>
        </MainPane>
        <IndicatorPane>
          <IndicatorChart />
          <IndicatorTitle>TradesEfficiency 0.0 -89.0 21.0</IndicatorTitle>
        </IndicatorPane>
        <TimeAxis>
          {TIMES.map((t) => <TimeTick key={t}>{t}</TimeTick>)}
        </TimeAxis>
      </ChartArea>
      <TabStrip>
        <TabRow>
          {TABS.map(([t, w, ml], i) => (
            <Tab key={t} $w={w} $active={t === 'DSXH22,M1'} $sep={i < 7} style={ml ? { marginLeft: ml } : undefined}>{t}</Tab>
          ))}
        </TabRow>
        <TabPager><span>‹</span><span>›</span></TabPager>
      </TabStrip>
      <TableWrap>
        <Table>
          <HeadRow>
            {HEADS.map((h, i) => (
              <HeadCell key={i} $first={i === 0}>{h}{i === 0 && <SortArrow />}</HeadCell>
            ))}
          </HeadRow>
          {ROWS.map((r, ri) => (
            <DataRow key={ri} $alt={ri % 2 === 1}>
              {r.map((c, i) => {
                let hl;
                if (i === 6 && ri < 3) hl = 'sl';
                if (i === 7 && ri === 3) hl = 'tp';
                return (
                  <DataCell key={i} $first={i === 0} $profit={i >= 10} $hl={hl}>
                    {i === 0 && <RowMark />}{c}
                  </DataCell>
                );
              })}
            </DataRow>
          ))}
          <TotalRow>
            <TotalLeft><TotalMark />{'Прибыль: 294.08  Кредит: 0.00  Пополнение: 600.00  Снятие: 0.00  Баланс: 894.08'}</TotalLeft>
            <span>323.72</span>
          </TotalRow>
        </Table>
        <Scroll>
          <ScrollBtn $h={16}>
            <svg width="9" height="6" viewBox="0 0 9 6" fill="none" stroke="#555"><path d="M1 5l3.500-4L8 5" /></svg>
          </ScrollBtn>
          <ScrollThumb />
          <ScrollBtn $h={14} $end>
            <svg width="9" height="6" viewBox="0 0 9 6" fill="none" stroke="#333"><path d="M1 1l3.500 4L8 1" /></svg>
          </ScrollBtn>
        </Scroll>
      </TableWrap>
      <BottomEdge>
        <EdgeLine $w={122} />
        <EdgeLine $w={65} $gap />
        <EdgeLine />
      </BottomEdge>
      <Pointer>
        <svg width="12" height="9" viewBox="0 0 12 9" fill="#fff" stroke="#000"><path d="M.5 .5L8 8.500H.5z" /></svg>
      </Pointer>
    </Page>
  );
}
